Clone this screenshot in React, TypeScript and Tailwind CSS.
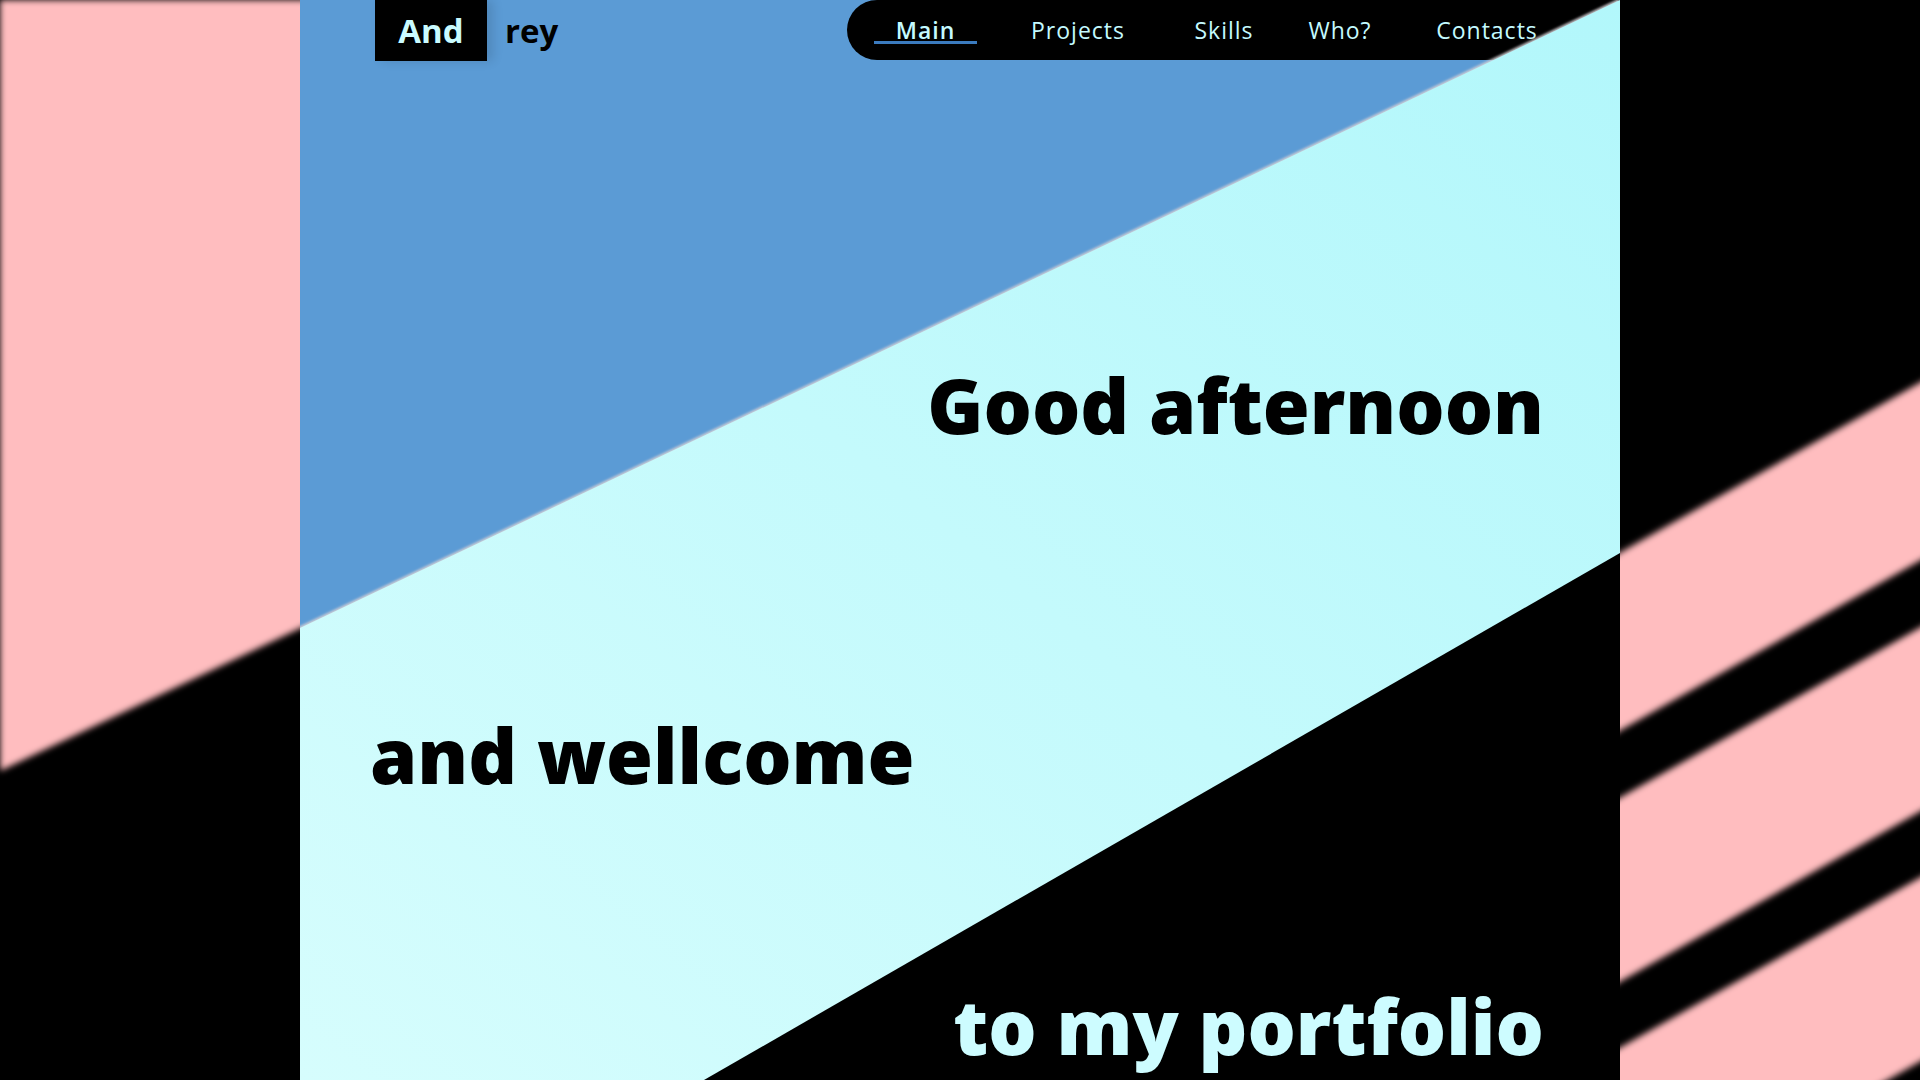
const links = [
  { label: "Main", w: "w-[103px]", active: true },
  { label: "Projects", w: "w-[202px]" },
  { label: "Skills", w: "w-[90px]" },
  { label: "Who?", w: "w-[142px]" },
  { label: "Contacts", w: "w-[152px]" },
];

function Backdrop() {
  // blurred stripes seen on both sides of the page
  return (
    <svg
      className="absolute left-0 top-0 h-[1120px] w-[1960px] blur-[3px]"
      viewBox="0 0 1960 1120"
    >
      <rect width="1960" height="1120" fill="#000" />
      <polygon points="0,0 330,0 330,614 0,771" fill="#ffbdbf" />
      <polygon points="1600,564 1960,360 1960,538 1600,742" fill="#ffbdbf" />
      <polygon points="1600,809 1960,605 1960,789 1600,993" fill="#ffbdbf" />
      <polygon points="1600,1059 1960,855 1960,1039 1600,1243" fill="#ffbdbf" />
    </svg>
  );
}

function Shapes() {
  return (
    <svg
      className="pointer-events-none absolute inset-0 z-10 h-full w-full"
      viewBox="0 0 1320 1080"
      preserveAspectRatio="none"
    >
      <defs>
        <linearGradient id="sky" x1="0" y1="1" x2="1" y2="0">
          <stop offset="0" stopColor="#d6fdfd" />
          <stop offset="1" stopColor="#b2f7fb" />
        </linearGradient>
        <filter id="edge" x="-5%" y="-5%" width="110%" height="110%">
          <feDropShadow dx="-1" dy="-1.5" stdDeviation="1" floodColor="#d4d0d4" floodOpacity="0.9" />
        </filter>
      </defs>
      <polygon points="1320,0 0,628 0,1080 1320,1080" fill="url(#sky)" filter="url(#edge)" />
      <polygon points="1320,553 404,1080 1320,1080" fill="#000" />
    </svg>
  );
}

export default function App() {
  return (
    <div className="relative h-[1080px] w-[1920px] overflow-hidden bg-black font-['Open_Sans',sans-serif]">
      <Backdrop />
      <div className="relative mx-auto h-[1080px] w-[1320px] overflow-hidden bg-[#5b9bd5]">
        <header className="relative flex h-[60px] items-start justify-between pl-[75px]">
          <div className="flex items-center">
            <div className="flex h-[61px] w-[112px] items-center justify-center bg-black text-[33px] font-bold text-[#cafbff] shadow-[6px_0_10px_rgba(0,0,0,0.12)]">
              And
            </div>
            <span className="ml-[18px] text-[33px] font-bold text-black">rey</span>
          </div>
          <nav className="flex h-[60px] w-[773px] items-center rounded-l-[30px] bg-black pl-[27px]">
            {links.map((l) => (
              <a
                key={l.label}
                href="#"
                className={`relative flex h-[60px] items-center justify-center pt-[1px] ${l.w} text-[23px] tracking-[1px] text-[#c4faff] ${l.active ? "font-semibold" : "font-normal"}`}
              >
                {l.label}
                {l.active && <span className="absolute left-0 right-0 top-[41px] h-[3px] bg-[#3b7bbf]" />}
              </a>
            ))}
          </nav>
        </header>

        <Shapes />

        <main className="relative z-20 flex flex-col px-[76px]">
          <h1 className="mt-[307px] self-end text-[76px] font-extrabold leading-none text-black">
            Good afternoon
          </h1>
          <h2 className="-ml-[6px] mt-[274px] self-start text-[76px] font-extrabold leading-none text-black">
            and wellcome
          </h2>
          <h2 className="mt-[195px] self-end text-[76px] font-extrabold leading-none text-[#cdfcff]">
            to my portfolio
          </h2>
        </main>
      </div>
    </div>
  );
}
